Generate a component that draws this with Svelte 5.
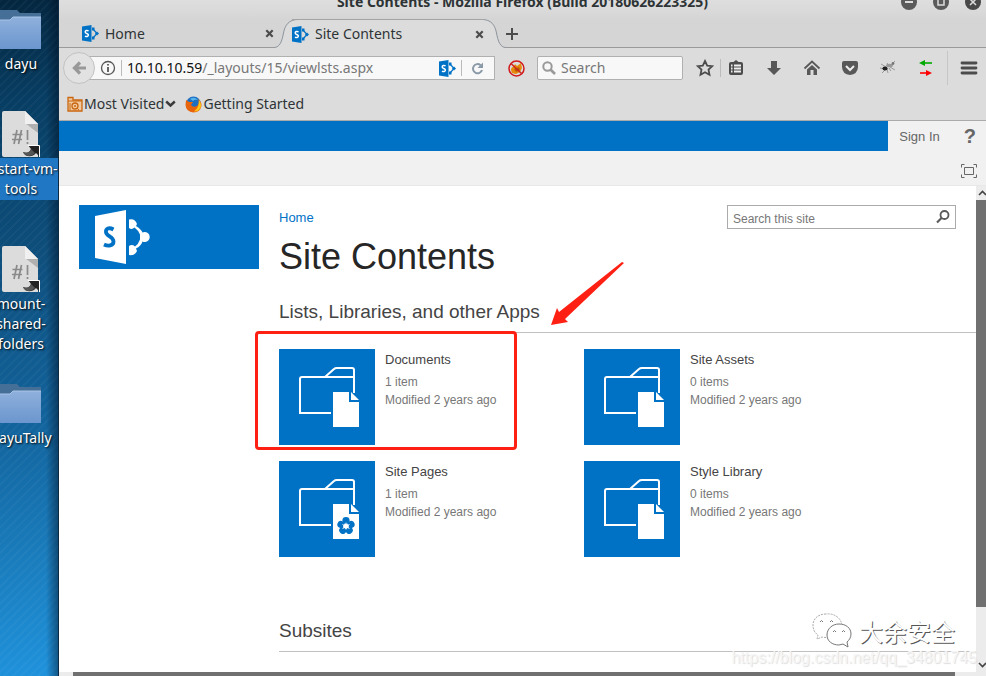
<script>
  const shortcuts = [
    { kind: 'folder', lines: ['dayu'], selected: false },
    { kind: 'script', lines: ['restart-vm-', 'tools'], selected: true },
    { kind: 'script', lines: ['mount-', 'shared-', 'folders'], selected: false },
    { kind: 'folder', lines: ['dayuTally'], selected: false }
  ];

  const apps = [
    { name: 'Documents', count: '1 item', marked: true },
    { name: 'Site Assets', count: '0 items' },
    { name: 'Site Pages', count: '1 item', flower: true },
    { name: 'Style Library', count: '0 items' }
  ];

  const petals = [0, 72, 144, 216, 288];
</script>

{#snippet spIcon(size)}
  <svg width={size} height={size} viewBox="0 0 17 17" aria-hidden="true">
    <path d="M11 4 15 8.500 11 13" fill="none" stroke="#0072c6" stroke-width="1.200" />
    <path d="M10 2.500H12.500V5.500H10zM10 11.500H12.500V14.500H10z" fill="#0072c6" />
    <path d="M13 8.500 15 6.500 17 8.500 15 10.500z" fill="#0072c6" />
    <path d="M0 1.500 9.500 0V17L0 15.500z" fill="#0072c6" />
    <path d="M6.600 5.800C5 5 3.200 5.400 3.200 6.900c0 1.700 3.200 1.500 3.200 3.200 0 1.500-2 1.800-3.400 1" fill="none" stroke="#fff" stroke-width="1.500" />
  </svg>
{/snippet}

{#snippet cross()}
  <svg width="9" height="9" viewBox="0 0 9 9" aria-hidden="true">
    <path d="M1.300 1.300 7.700 7.700M7.700 1.300 1.300 7.700" stroke="#4c4c4c" stroke-width="2.200" />
  </svg>
{/snippet}

<div class="screen">
  <aside class="desktop" aria-label="Desktop">
    <ul>
      {#each shortcuts as s}
        <li class={s.kind}>
          {#if s.kind === 'folder'}
            <svg width="46" height="40" viewBox="0 0 46 40" aria-hidden="true">
              <defs>
                <linearGradient id="fold" x1="0" y1="0" x2="0" y2="1">
                  <stop offset="0" stop-color="#8fb0dc" />
                  <stop offset="1" stop-color="#6b96ce" />
                </linearGradient>
              </defs>
              <path d="M0 0H21L24 3H45V12H0z" fill="#456f96" />
              <path d="M0 10H14L17 7H45V39H0z" fill="url(#fold)" />
              <path d="M0 10H14L17 7H45" fill="none" stroke="#a9c4e8" />
            </svg>
          {:else}
            <svg width="38" height="47" viewBox="0 0 38 47" aria-hidden="true">
              <path d="M2 0H23L36 13V46H2Q0 46 0 44V2Q0 0 2 0z" fill="#dcdcdc" />
              <path d="M23 0 36 13V22L23 12z" fill="#b0b0b0" />
              <path d="M23 0 36 13H23z" fill="#f0f0f0" />
              <path d="M15 19 12 33M19.500 19 16.500 33M10.500 23.500H20.500M10 28.500H20M25.500 19V29M25.500 31V33" fill="none" stroke="#8a8a8a" stroke-width="1.700" />
              <path d="M21 41C25 43 28 41 29 38L26 34H38V46L34 42C30 47 23 46 21 41z" fill="#222" />
              <path d="M26 34.500H37.500V46" fill="none" stroke="#fff" />
              <path d="M21 41C25 43 28 41 29 38L33 42C29 46 23 46 21 41z" fill="#555" />
            </svg>
          {/if}
          <span class="caption" class:selected={s.selected}>
            {#each s.lines as line}<span>{line}</span>{/each}
          </span>
        </li>
      {/each}
    </ul>
  </aside>

  <main class="window">
    <header class="titlebar">
      <span class="title">Site Contents - Mozilla Firefox (Build 20180626223325)</span>
      <div class="controls">
        <button aria-label="Minimize"><svg width="16" height="16" viewBox="0 0 16 16"><circle cx="8" cy="8" r="8" fill="#5a5a5a" /><path d="M4 8H12" stroke="#ddd" stroke-width="2" /></svg></button>
        <button aria-label="Maximize"><svg width="16" height="16" viewBox="0 0 16 16"><circle cx="8" cy="8" r="8" fill="#5a5a5a" /><path d="M5 5H11V11H5z" fill="none" stroke="#ddd" stroke-width="1.500" /></svg></button>
        <button aria-label="Close window"><svg width="16" height="16" viewBox="0 0 16 16"><circle cx="8" cy="8" r="8" fill="#484848" /><path d="M5 5 11 11M11 5 5 11" stroke="#ddd" stroke-width="1.500" /></svg></button>
      </div>
    </header>

    <nav class="tabs" aria-label="Tabs">
      <div class="tab first">
        {@render spIcon(17)}
        <span>Home</span>
        <button aria-label="Close Home">{@render cross()}</button>
      </div>
      <svg class="edge" width="24" height="29" viewBox="0 0 24 29" aria-hidden="true">
        <path d="M0 29C6 28 8 22 9.500 14C11 6 15 .500 24 .500V29z" fill="#dcdcdc" />
        <path d="M0 28.500C6 28.500 8 22 9.500 14C11 6 15 .500 24 .500" fill="none" stroke="#8d949c" />
      </svg>
      <div class="tab active">
        {@render spIcon(17)}
        <span>Site Contents</span>
        <button aria-label="Close Site Contents">{@render cross()}</button>
      </div>
      <svg class="edge right" width="24" height="29" viewBox="0 0 24 29" aria-hidden="true">
        <path d="M24 29C18 28 16 22 14.500 14C13 6 9 .500 0 .500V29z" fill="#dcdcdc" />
        <path d="M24 28.500C18 28.500 16 22 14.500 14C13 6 9 .500 0 .500" fill="none" stroke="#8d949c" />
      </svg>
      <div class="rest">
        <button aria-label="New tab"><svg width="12" height="12" viewBox="0 0 12 12"><path d="M6 0V12M0 6H12" stroke="#4c4c4c" stroke-width="2" /></svg></button>
      </div>
    </nav>

    <div class="toolbar">
      <button class="back" aria-label="Back"><svg width="15" height="14" viewBox="0 0 15 14"><path d="M14 7H3M8 1.500 2.500 7 8 12.500" fill="none" stroke="#999" stroke-width="3.200" /></svg></button>
      <div class="urlbar">
        <svg width="16" height="16" viewBox="0 0 16 16" aria-hidden="true"><circle cx="8" cy="8" r="6.500" fill="none" stroke="#555" stroke-width="1.300" /><path d="M8 7V12M8 4V5.600" stroke="#555" stroke-width="1.800" /></svg>
        <i class="bar"></i>
        <a class="address" href="#address"><b>10.10.10.59</b>/_layouts/15/viewlsts.aspx</a>
        {@render spIcon(17)}
        <i class="bar"></i>
        <button aria-label="Reload"><svg width="13" height="13" viewBox="0 0 13 13"><path d="M9.600 3.200A4.600 4.600 0 1 0 11 8" fill="none" stroke="#8b9aa8" stroke-width="2" /><path d="M12 .500V6H6.500z" fill="#8b9aa8" /></svg></button>
      </div>
      <button class="fox" aria-label="Proxy disabled"><svg width="17" height="17" viewBox="0 0 17 17"><path d="M3 10C3 7 6 7 7 4L9 6 13 3 14 8 12 12 8 14 4 13z" fill="#e8890c" /><path d="M6 9 11 7 12 10 8 12z" fill="#b85c00" /><circle cx="8.500" cy="8.500" r="7.500" fill="none" stroke="#d21a1a" stroke-width="1.500" /><path d="M3 3.500 14 14" stroke="#c22" stroke-width="1.500" /></svg></button>
      <label class="websearch">
        <svg width="14" height="14" viewBox="0 0 14 14" aria-hidden="true"><circle cx="5.500" cy="5.500" r="4.200" fill="none" stroke="#999" stroke-width="2" /><path d="M8.500 8.500 13 13" stroke="#999" stroke-width="2.600" /></svg>
        <input type="text" placeholder="Search" aria-label="Search the web" />
      </label>
      <div class="tools">
        <button aria-label="Bookmark"><svg width="18" height="18" viewBox="0 0 18 18"><path d="M9 2 11.200 6.600 16.200 7.200 12.500 10.600 13.500 15.700 9 13.200 4.500 15.700 5.500 10.600 1.800 7.200 6.800 6.600z" fill="none" stroke="#4c4c4c" stroke-width="1.800" /></svg></button>
        <i class="bar"></i>
        <button aria-label="Bookmarks list"><svg width="18" height="18" viewBox="0 0 18 18"><path d="M4 3H6.500L9 1 11.500 3H14Q16 3 16 5V14Q16 16 14 16H4Q2 16 2 14V5Q2 3 4 3z" fill="#4c4c4c" /><path d="M4 6.500H5.500M7 6.500H14M4 9.500H5.500M7 9.500H14M4 12.500H5.500M7 12.500H14" stroke="#eee" stroke-width="1.800" /></svg></button>
        <button aria-label="Downloads"><svg width="18" height="18" viewBox="0 0 18 18"><path d="M6 2H12V9H16L9 16 2 9H6z" fill="#585858" /></svg></button>
        <button aria-label="Home page"><svg width="18" height="18" viewBox="0 0 18 18"><path d="M1.500 9.500 9 2.500 16.500 9.500" fill="none" stroke="#585858" stroke-width="1.800" /><path d="M4 10.500 9 6 14 10.500V16H10.500V11H7.500V16H4z" fill="#585858" /></svg></button>
        <button aria-label="Pocket"><svg width="18" height="18" viewBox="0 0 18 18"><path d="M3 2H15Q17 2 17 4V8Q16.500 15.500 9 16 1.500 15.500 1 8V4Q1 2 3 2z" fill="#585858" /><path d="M5 7 9 11 13 7" fill="none" stroke="#eee" stroke-width="2" /></svg></button>
        <button aria-label="Bug tool"><svg width="18" height="18" viewBox="0 0 18 18"><path d="M2 5 7 8M3 14 6 11M9 14 8 10M12 12 10 9M8 4 10 7M16 11 11 8M16 2 12 6M1 9 6 10" stroke="#999" /><ellipse cx="6" cy="9.500" rx="2.600" ry="2" fill="#222" /><ellipse cx="10.500" cy="6.500" rx="3.500" ry="1.800" fill="#999" /><circle cx="14" cy="4.500" r="1.400" fill="#777" /></svg></button>
        <button aria-label="Switch proxy"><svg width="18" height="18" viewBox="0 0 18 18"><path d="M5 4H15" stroke="#0a0" stroke-width="1.600" /><path d="M2 4 8 1V7z" fill="#0a0" /><path d="M3 14H12" stroke="#f00" stroke-width="1.600" /><path d="M15 14 9 11V17z" fill="#f00" /></svg></button>
        <i class="bar tall"></i>
        <button aria-label="Menu"><svg width="18" height="18" viewBox="0 0 18 18"><path d="M2 4H16M2 9H16M2 14H16" stroke="#4c4c4c" stroke-width="2.800" stroke-linecap="round" /></svg></button>
      </div>
    </div>

    <div class="bookmarks">
      <button>
        <svg width="16" height="16" viewBox="0 0 16 16" aria-hidden="true"><path d="M1 1.500H6V4H15V15H1z" fill="#f1c9a0" stroke="#c9660f" stroke-width="1.300" /><path d="M1 5H15" stroke="#c9660f" /><circle cx="8" cy="10" r="3" fill="none" stroke="#c9660f" stroke-width="1.300" /><circle cx="8" cy="10" r="1" fill="#c9660f" /><path d="M10 12 12 14M3 7V14" stroke="#c9660f" /></svg>
        Most Visited
        <svg width="11" height="8" viewBox="0 0 11 8" aria-hidden="true"><path d="M1.200 1.500 5.500 5.500 9.800 1.500" fill="none" stroke="#3a3a3a" stroke-width="2.400" /></svg>
      </button>
      <a href="#started">
        <svg width="17" height="17" viewBox="0 0 17 17" aria-hidden="true"><circle cx="8.500" cy="8" r="7.500" fill="#1f6fc0" /><path d="M5 3Q9 0 13 4 10 3 8 5z" fill="#56b4ec" /><path d="M1 4 4 6 8 6 6 9Q8 12 12 10 15 7 13 3 17 6 16.500 10 15 16.500 8.500 16.500 1 16 .500 9z" fill="#e8640c" /><path d="M14 4Q17 8 15.500 12 13 16 9 15.500 14 12 14 4z" fill="#fcc419" /></svg>
        Getting Started
      </a>
    </div>

    <div class="suite">
      <div class="blue"></div>
      <a href="#signin">Sign In</a>
      <button aria-label="Help">?</button>
    </div>
    <div class="ribbon">
      <button aria-label="Focus on content"><svg width="16" height="14" viewBox="0 0 16 14"><path d="M.500 3.500V.500H3.500M12.500 .500H15.500V3.500M15.500 10.500V13.500H12.500M3.500 13.500H.500V10.500M3.500 3.500H12.500V10.500H3.500z" fill="none" stroke="#666" /></svg></button>
    </div>

    <div class="viewport">
      <div class="page">
        <a class="logo" href="#home" aria-label="SharePoint">
          <svg width="56" height="54" viewBox="0 0 56 54" aria-hidden="true">
            <path d="M0 6 31 0V54L0 48z" fill="#fff" />
            <path d="M18.500 19.500C14 17 10.500 18.500 11 22.200 11.500 26.500 18.500 26.500 18.500 31.500 18.500 36 13 36.500 9 34.500" fill="none" stroke="#0072c6" stroke-width="3.800" />
            <path d="M34 9.500Q40 8 42 14L41 16Q46 19 47.500 22.500A5 5 0 1 1 47.500 31.500Q46 36 41 38.500L42 41Q40 46 34 45V36Q37 34 40 36.500 43.500 34 45 29.500V24.500Q43 20 39.500 17.500 37 20 34 18z" fill="#fff" />
          </svg>
        </a>
        <div class="content">
          <div class="top">
            <div>
              <a class="crumb" href="#home">Home</a>
              <h1>Site Contents</h1>
            </div>
            <label class="sitesearch">
              <input type="text" placeholder="Search this site" aria-label="Search this site" />
              <svg width="14" height="14" viewBox="0 0 14 14" aria-hidden="true"><circle cx="8.500" cy="5" r="4" fill="none" stroke="#5a5a5a" stroke-width="1.800" /><path d="M5.500 8 1 12.500" stroke="#5a5a5a" stroke-width="2.200" /></svg>
            </label>
          </div>
          <h2>
            Lists, Libraries, and other Apps
            <svg class="arrow" width="74" height="64" viewBox="0 0 74 64" aria-hidden="true"><path d="M71 0 73 1 14 57 17 60 0 63 6 46 8 50z" fill="#fe2012" /></svg>
          </h2>
          <ul class="apps">
            {#each apps as app}
              <li class:marked={app.marked}>
                <a class="tile" href="#app" aria-label={app.name}>
                  <svg width="96" height="96" viewBox="0 0 96 96" aria-hidden="true">
                    <path d="M52 64H21V30Q21 28 23 28H75M46 28 55 20Q56 19 58 19H73Q75 19 75 21V44" fill="none" stroke="#fff" stroke-width="2" />
                    <path d="M54 43H70V53H80V78H54z" fill="#fff" />
                    <path d="M72 43 80 51H72z" fill="#fff" />
                    {#if app.flower}
                      <g fill="#0072c6">
                        {#each petals as angle}
                          <ellipse cx="67" cy="59.500" rx="3.600" ry="3.400" transform="rotate({angle} 67 65)" />
                        {/each}
                      </g>
                      <path d="M67 61 68 64 71 63 69 65.500 71 68 68 67 67 69 66 67 63 68 65 65.500 63 63 66 64z" fill="#fff" />
                    {/if}
                  </svg>
                </a>
                <div class="info">
                  <a href="#app">{app.name}</a>
                  <p>{app.count}</p>
                  <p>Modified 2 years ago</p>
                </div>
              </li>
            {/each}
          </ul>
          <h2 class="subsites">Subsites</h2>
        </div>
      </div>
      <div class="vbar" aria-hidden="true">
        <svg width="10" height="14" viewBox="0 0 10 14"><path d="M3 9 6.500 5.500 10 9" fill="none" stroke="#444" stroke-width="1.600" /></svg>
        <i></i>
        <svg class="down" width="10" height="14" viewBox="0 0 10 14"><path d="M3 5 6.500 8.500 10 5" fill="none" stroke="#444" stroke-width="1.600" /></svg>
      </div>
      <div class="watermark">
        <div class="brand">
          <svg width="40" height="35" viewBox="0 0 40 35" aria-hidden="true">
            <g fill="#fff" stroke="#aaa" stroke-width="1">
              <path d="M14 1C6 1 1 6 1 12 1 17 3 20 6 22L5 26 10 24Q14 25 18 24A13 11 0 0 0 14 1z" stroke-dasharray="2 1" />
              <path d="M27 11C20 11 15 16 15 22 15 28 20 32 27 32L31 31 36 34 35 29C37 27 39 25 39 21 39 15 34 11 27 11z" stroke="#777" />
              <path d="M8 9Q9.500 6 11 9M18 9Q19.500 6 21 9M21 19Q22.500 16 24 19M30 19Q31.500 16 33 19" fill="none" stroke="#777" />
            </g>
          </svg>
          <span>大余安全</span>
        </div>
        <span class="source">https://blog.csdn.net/qq_34801745</span>
      </div>
    </div>
    <div class="hbar" aria-hidden="true"><i></i></div>
  </main>
</div>

<style>
  :global(body) { margin: 0; overflow: hidden; }
  .screen {
    display: flex;
    height: 100vh;
    overflow: hidden;
    font: 14px/20px "Noto Sans", sans-serif;
    color: #2e3436;
  }
  ul { list-style: none; margin: 0; padding: 0; }
  button { border: 0; padding: 0; background: none; font: inherit; color: inherit; display: flex; align-items: center; }
  a { color: inherit; text-decoration: none; }
  svg { display: block; flex: none; }
  input { border: 0; outline: 0; padding: 0; background: none; min-width: 0; font: inherit; color: inherit; }
  input::placeholder { color: #777; opacity: 1; }

  .desktop {
    flex: none;
    box-sizing: border-box;
    width: 59px;
    overflow: hidden;
    border-right: 1px solid #0c2a42;
    background:
      linear-gradient(90deg, transparent 46px, rgba(0, 15, 35, 0.45)),
      repeating-linear-gradient(135deg, rgba(255, 255, 255, 0.03) 0 2px, transparent 2px 6px),
      linear-gradient(172deg, #04263f 0, #073d62 100px, #0e4f7d 260px, #12639c 420px, #1a7dbd 560px, #1f92dc 676px);
  }
  .desktop ul { display: flex; flex-direction: column; align-items: center; width: 122px; margin-left: -40px; padding-top: 10px; }
  .desktop li { display: flex; flex-direction: column; align-items: center; width: 100%; padding-bottom: 36px; }
  .desktop li.script { padding-bottom: 46px; }
  .desktop li.script + li.script { padding-bottom: 29px; }
  .desktop li.folder { gap: 3px; }
  .desktop li.folder svg { margin-left: -4px; }
  .caption { display: flex; flex-direction: column; align-items: center; width: 100%; padding: 1px 0; color: #fff; text-shadow: 1px 1px 2px #000; }
  .caption.selected { background: #2077c4; }

  .window { flex: 1; min-width: 0; display: flex; flex-direction: column; background: #dcdcdc; }
  .titlebar { position: relative; flex: none; display: flex; justify-content: center; align-items: flex-end; height: 12px; padding-bottom: 6px; overflow: hidden; background: linear-gradient(#dedede, #d6d6d6); }
  .title { font-weight: 700; line-height: 20px; }
  .controls { position: absolute; right: 5px; bottom: 8px; display: flex; gap: 16px; }

  .tabs { flex: none; display: flex; height: 30px; background: #d5d5d5; }
  .tab, .rest { box-sizing: border-box; display: flex; align-items: center; height: 30px; padding-top: 2px; }
  .tab { gap: 6px; }
  .tab span { flex: 1; }
  .tab.first { width: 215px; padding-left: 23px; border-bottom: 1px solid #9a9a9a; }
  .tab.active { width: 192px; margin-left: -6px; border-top: 1px solid #a4a4a4; margin-top: 1px; padding-top: 0; height: 29px; background: linear-gradient(#dcdcdc, #dcdcdc) 6px 0 no-repeat; z-index: 1; }
  .edge { margin-top: 1px; }
  .edge.right { margin-left: -2px; }
  .rest { flex: 1; border-bottom: 1px solid #9a9a9a; }

  .toolbar { flex: none; display: flex; align-items: center; height: 40px; padding: 0 8px 0 4px; }
  .back { flex: none; box-sizing: border-box; width: 32px; height: 32px; justify-content: center; border: 1px solid #c2c2c2; border-radius: 50%; background: #e2e2e2; z-index: 1; }
  .urlbar, .websearch { box-sizing: border-box; display: flex; align-items: center; height: 24px; border: 1px solid #b0b0b0; background: #f8f8f8; }
  .urlbar { flex: 1; min-width: 0; gap: 5px; margin-left: -6px; padding: 0 10px; }
  .urlbar .bar { height: 16px; }
  .urlbar button { margin-left: 4px; }
  .address { flex: 1; min-width: 0; white-space: nowrap; color: #777; }
  .address b { font-weight: 400; color: #111; }
  .bar { flex: none; width: 1px; height: 18px; background: #bbb; }
  .bar.tall { height: 34px; background: #c6c6c6; }
  .fox { margin: 0 12px 0 13px; }
  .websearch { flex: none; width: 146px; gap: 5px; padding-left: 4px; border-radius: 2px; }
  .websearch input { width: 110px; }
  .tools { display: flex; align-items: center; gap: 20px; margin-left: 13px; }
  .tools .bar { margin: 0 -14px; }
  .tools .bar.tall { margin: 0 -8px; }

  .bookmarks { flex: none; display: flex; gap: 9px; box-sizing: border-box; height: 33px; padding: 0 8px; border-bottom: 1px solid #aaa; }
  .bookmarks button, .bookmarks a { display: flex; align-items: center; gap: 1px; }

  .suite, .ribbon, .viewport { font-family: "Liberation Sans", Arial, sans-serif; }
  .suite { flex: none; display: flex; align-items: center; height: 30px; background: #f1f1f1; color: #666; font-size: 13px; }
  .suite .blue { flex: 1; align-self: stretch; background: #0072c6; }
  .suite a { padding: 2px 24px 0 11px; }
  .suite button { padding-right: 10px; font-size: 20px; font-weight: 700; color: #666; }
  .ribbon { flex: none; display: flex; align-items: center; justify-content: flex-end; box-sizing: border-box; height: 35px; padding: 5px 9px 0 0; border-bottom: 1px solid #e8e8e8; background: #f1f1f1; }

  .viewport { position: relative; flex: 1; min-height: 0; display: flex; background: #fff; }
  .page { flex: 1; min-width: 0; display: flex; gap: 20px; overflow: hidden; padding: 19px 0 0 20px; }
  .logo { flex: none; display: flex; align-items: center; box-sizing: border-box; width: 180px; height: 64px; padding-left: 16px; background: #0072c6; }
  .content { flex: 1; min-width: 0; }
  .top { display: flex; justify-content: space-between; align-items: flex-start; padding-right: 20px; }
  .crumb { display: block; padding-top: 3px; font-size: 13px; line-height: 20px; color: #0072c6; }
  h1 { margin: 7px 0 0; font-size: 36px; line-height: 44px; font-weight: 400; color: #262626; }
  h2 { position: relative; box-sizing: border-box; height: 54px; margin: 0; padding-top: 21px; border-bottom: 1px solid #c0c0c0; font-size: 19px; line-height: 24px; font-weight: 400; color: #444; }
  .arrow { position: absolute; left: 272px; top: -17px; }
  .sitesearch { display: flex; align-items: center; box-sizing: border-box; width: 229px; height: 24px; border: 1px solid #ababab; padding: 0 5px; font-size: 12px; }
  .sitesearch input { flex: 1; padding-top: 3px; }
  .apps { display: grid; grid-template-columns: 305px 305px; gap: 16px 0; padding-top: 16px; }
  .apps li { position: relative; display: flex; gap: 10px; }
  .marked::after { content: ""; position: absolute; left: -24px; top: -18px; box-sizing: border-box; width: 262px; height: 119px; border: 3px solid #fe2012; border-radius: 4px; pointer-events: none; }
  .tile { display: block; height: 96px; background: #0072c6; }
  .info { font-size: 12px; line-height: 18px; color: #777; }
  .info a { display: block; padding: 1px 0 4px; font-size: 13px; line-height: 19px; color: #444; }
  .info p { margin: 0; }
  .subsites { margin-top: 41px; }

  .vbar { flex: none; display: flex; flex-direction: column; width: 10px; background: #ececec; }
  .vbar i { flex: 0 1 407px; background: #707070; }
  .vbar .down { margin-top: auto; }
  .hbar { flex: none; height: 4px; padding: 0 31px 0 14px; background: #ececec; }
  .hbar i { display: block; height: 100%; background: #707070; }

  .watermark { position: absolute; right: 9px; bottom: 4px; display: flex; flex-direction: column; align-items: flex-end; pointer-events: none; }
  .brand { display: flex; align-items: center; gap: 7px; padding-right: 22px; font: 24px/34px "Noto Sans CJK SC", sans-serif; color: #fff; text-shadow: 1px 1px 0 #555; }
  .source { font-size: 16px; line-height: 20px; color: #f6f6f6; text-shadow: 1px 1px 1px #ddd; }
</style>
